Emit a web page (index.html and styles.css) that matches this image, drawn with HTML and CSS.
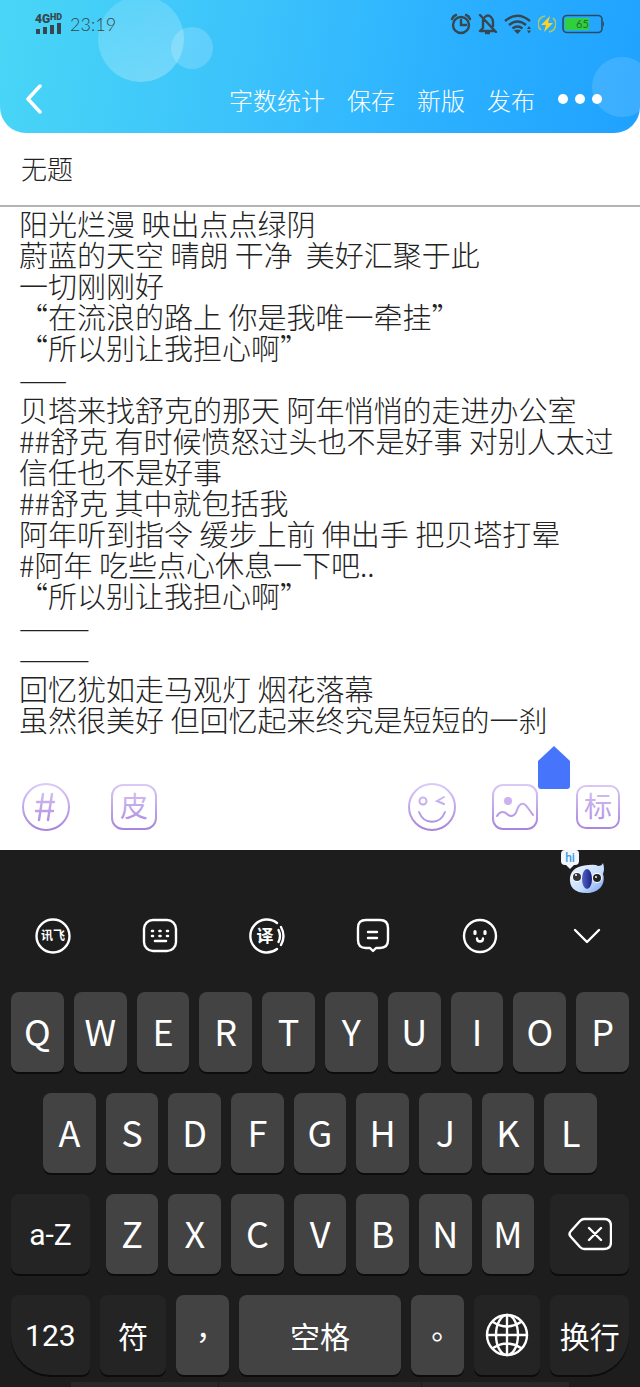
FILE: index.html
```html
<!DOCTYPE html>
<html lang="zh-CN">
<head>
    <meta charset="UTF-8">
    <meta name="viewport" content="width=device-width, initial-scale=1.0">
    <title>无题</title>
    <link rel="stylesheet" href="styles.css">
</head>
<body>
    <header class="header">
        <span class="bubble bubble-big"></span>
        <span class="bubble bubble-small"></span>
        <span class="bubble bubble-right"></span>
        <div class="status">
            <svg class="signal" width="28" height="24" viewBox="0 0 28 24">
                <text x="0" y="11" font-size="12">4G</text>
                <text x="15" y="8" font-size="9">HD</text>
                <path d="M1 17h4v5H1zM8 15h4v7H8zM15 13h4v9h-4zM22 11h4v11h-4z"/>
            </svg>
            <span class="time">23:19</span>
            <div class="status-icons">
                <svg width="22" height="22" viewBox="0 0 22 22" fill="none" stroke="#37474f" stroke-width="2.4">
                    <circle cx="11" cy="12" r="8"/>
                    <path d="M11 7v5h5M2 6q1-3 4-4M20 6q-1-3-4-4" stroke-linecap="round"/>
                </svg>
                <svg width="20" height="22" viewBox="0 0 20 22" fill="none" stroke="#37474f" stroke-width="2.4">
                    <path d="M5 7v8l-3 3h14M7 4q3-3 6 0 2 2 2 5v4M2 2l16 17" stroke-linecap="round" stroke-linejoin="round"/>
                    <path d="M7 20h5"/>
                </svg>
                <svg width="28" height="22" viewBox="0 0 28 22" fill="none" stroke="#37474f" stroke-width="2.4">
                    <path d="M1 8q12.500-10.500 25 0M5 12q8.500-7 17 0M8.500 15.500q5-4 10 0"/>
                    <path d="M10 17.500q3.500-2 7 0L13.500 21z" fill="#37474f" stroke="none"/>
                    <path d="M23 16l2-3 2 3zM23 17.500l2 3 2-3z" fill="#37474f" stroke="none"/>
                </svg>
                <svg width="18" height="20" viewBox="0 0 18 20">
                    <path d="M7 2A8 8 0 0 0 3 16M11 18A8 8 0 0 0 15 4" fill="none" stroke="#b5c95a" stroke-width="1.600"/>
                    <path d="M12 2L3 11h5l-2 7 9-9h-5z" fill="#ffd21f"/>
                </svg>
                <svg class="battery" width="43" height="20" viewBox="0 0 43 20">
                    <rect x="1" y="1.500" width="39" height="17" rx="4" fill="none" stroke="#2d4a63" stroke-width="1.600"/>
                    <path d="M41 7q2 3 0 6z" fill="#2d4a63"/>
                    <rect x="3" y="4" width="24" height="12" rx="2" fill="#2ed13c"/>
                    <text x="14" y="14" font-size="11">65</text>
                </svg>
            </div>
        </div>
        <nav class="nav">
            <button class="back" aria-label="返回">
                <svg width="18" height="30" viewBox="0 0 18 30" fill="none" stroke="#fff" stroke-width="3.500" stroke-linecap="round" stroke-linejoin="round"><path d="M15 2L3 15l12 13"/></svg>
            </button>
            <button>字数统计</button>
            <button>保存</button>
            <button>新版</button>
            <button>发布</button>
            <button class="more" aria-label="更多">
                <svg width="46" height="12" viewBox="0 0 46 12" fill="#fff"><circle cx="6" cy="6" r="5"/><circle cx="23" cy="6" r="5"/><circle cx="40" cy="6" r="5"/></svg>
            </button>
        </nav>
    </header>

    <main class="editor">
        <input class="title" type="text" value="无题" aria-label="标题">
        <textarea class="content" rows="17" aria-label="正文" spellcheck="false">阳光烂漫 映出点点绿阴
蔚蓝的天空 晴朗 干净  美好汇聚于此
一切刚刚好
“在流浪的路上 你是我唯一牵挂”
“所以别让我担心啊”
——
贝塔来找舒克的那天 阿年悄悄的走进办公室
##舒克 有时候愤怒过头也不是好事 对别人太过信任也不是好事
##舒克 其中就包括我
阿年听到指令 缓步上前 伸出手 把贝塔打晕
#阿年 吃些点心休息一下吧..
“所以别让我担心啊”
———
———
回忆犹如走马观灯 烟花落幕
虽然很美好 但回忆起来终究是短短的一刹</textarea>
        <svg class="handle" width="32" height="43" viewBox="0 0 32 43"><path d="M16 0l16 15v25q0 3-3 3H3q-3 0-3-3V15z" fill="#4674fb"/></svg>
        <div class="tools">
            <div class="tools-left">
                <button aria-label="话题">
                    <svg width="48" height="48" viewBox="0 0 48 48" fill="none" stroke="url(#violet)" stroke-width="2">
                        <defs>
                            <linearGradient id="violet" gradientUnits="userSpaceOnUse" x1="0" y1="0" x2="0" y2="48">
                                <stop offset="0" stop-color="#dccbf8"/>
                                <stop offset="1" stop-color="#a683dc"/>
                            </linearGradient>
                        </defs>
                        <circle cx="24" cy="24" r="23"/>
                        <path d="M21 11l-4 26M30 11l-4 26M15 19h17M14 28h17" stroke-width="2.400" stroke-linecap="round"/>
                    </svg>
                </button>
                <button aria-label="皮肤">
                    <svg width="48" height="48" viewBox="0 0 48 48" fill="none" stroke="url(#violet)" stroke-width="2">
                        <rect x="2" y="2" width="44" height="44" rx="11"/>
                        <text class="tool-text" x="24" y="34">皮</text>
                    </svg>
                </button>
            </div>
            <div class="tools-right">
                <button aria-label="表情">
                    <svg width="48" height="48" viewBox="0 0 48 48" fill="none" stroke="url(#violet)" stroke-width="2" stroke-linecap="round">
                        <circle cx="24" cy="24" r="23"/>
                        <circle cx="15" cy="18" r="3.500"/>
                        <path d="M36 14l-7 4 7 3M11 29c5 13 21 13 26 0"/>
                    </svg>
                </button>
                <button aria-label="图片">
                    <svg width="48" height="48" viewBox="0 0 48 48" fill="none" stroke="url(#violet)" stroke-width="2" stroke-linecap="round">
                        <rect x="2" y="2" width="44" height="44" rx="10"/>
                        <circle cx="17" cy="18" r="4" fill="#ccb2f2" stroke="none"/>
                        <path d="M6 33c3-5 7-5 10-2s8 3 10-4c3-8 7-8 11-2l5 7"/>
                    </svg>
                </button>
                <button aria-label="标签">
                    <svg width="48" height="48" viewBox="0 0 48 48" fill="none" stroke="url(#violet)" stroke-width="2">
                        <rect x="3" y="3" width="42" height="42" rx="9"/>
                        <text class="tool-text" x="24" y="34">标</text>
                    </svg>
                </button>
            </div>
        </div>
    </main>

    <section class="keyboard">
        <div class="mascot">
            <svg width="46" height="44" viewBox="0 0 46 44">
                <defs>
                    <linearGradient id="face" x1="0" y1="0" x2="1" y2="1">
                        <stop offset="0" stop-color="#f4f8ff"/>
                        <stop offset=".6" stop-color="#c4dcff"/>
                        <stop offset="1" stop-color="#6f9bf0"/>
                    </linearGradient>
                    <linearGradient id="nose" x1="0" x2="1">
                        <stop offset="0" stop-color="#5363c8"/>
                        <stop offset="1" stop-color="#18207d"/>
                    </linearGradient>
                </defs>
                <path d="M28 15q8-1 10 1 4 0 5-3 2 6 0 11c3 9-3 19-16 19S9 37 10 27q2-11 18-12z" fill="url(#face)"/>
                <circle cx="17" cy="27" r="5" fill="#fff"/><circle cx="17" cy="27" r="4" fill="#333"/><circle cx="16" cy="25" r="1" fill="#fff"/>
                <circle cx="37" cy="28" r="5" fill="#fff"/><circle cx="37" cy="28" r="4" fill="#222"/><circle cx="36" cy="27" r="1" fill="#fff"/>
                <ellipse cx="27" cy="29" rx="5" ry="10" fill="url(#nose)"/>
                <path d="M5 0h11q3 0 3 4v7q0 4-4 4h-1l-4 4-4-4H5q-4 0-4-4V4q0-4 4-4z" fill="#f3f7fc"/>
                <text class="hi" x="10" y="12">hi</text>
            </svg>
        </div>
        <div class="kb-tools">
            <button aria-label="讯飞">
                <svg width="36" height="36" viewBox="0 0 36 36">
                    <circle cx="18" cy="18" r="16.500"/>
                    <text x="18" y="22" font-size="12">讯飞</text>
                </svg>
            </button>
            <button aria-label="键盘">
                <svg width="36" height="36" viewBox="0 0 36 36">
                    <rect x="2" y="2" width="32" height="31" rx="9"/>
                    <path d="M10 13h1M17.500 13h1M25 13h1M10 18h1M17.500 18h1M25 18h1M13 23h11" stroke-width="2.600"/>
                </svg>
            </button>
            <button aria-label="翻译">
                <svg width="36" height="36" viewBox="0 0 36 36">
                    <path d="M28 5A16.500 16.500 0 1 0 28 31M29.500 12q3 6 0 12M32 9q5 9 0 18"/>
                    <text x="16" y="24" font-size="17">译</text>
                </svg>
            </button>
            <button aria-label="短语">
                <svg width="36" height="36" viewBox="0 0 36 36">
                    <path d="M11 2h14q8 0 8 8v12q0 8-8 8h-4l-3 3-3-3h-4q-8 0-8-8V10q0-8 8-8zM13 14h9M13 20h9"/>
                </svg>
            </button>
            <button aria-label="表情">
                <svg width="36" height="36" viewBox="0 0 36 36">
                    <circle cx="18" cy="18" r="16"/>
                    <path d="M13 13.500v2M23 13.500v2" stroke-width="3.200"/>
                    <path d="M15 20.500q0 3 3 3t3-3"/>
                </svg>
            </button>
            <button aria-label="收起">
                <svg width="36" height="36" viewBox="0 0 36 36"><path d="M6 12l12 12 12-12"/></svg>
            </button>
        </div>
        <div class="keys">
            <div class="row row-top">
                <button class="key">Q</button>
                <button class="key">W</button>
                <button class="key">E</button>
                <button class="key">R</button>
                <button class="key">T</button>
                <button class="key">Y</button>
                <button class="key">U</button>
                <button class="key">I</button>
                <button class="key">O</button>
                <button class="key">P</button>
            </div>
            <div class="row row-middle">
                <button class="key">A</button>
                <button class="key">S</button>
                <button class="key">D</button>
                <button class="key">F</button>
                <button class="key">G</button>
                <button class="key">H</button>
                <button class="key">J</button>
                <button class="key">K</button>
                <button class="key">L</button>
            </div>
            <div class="row row-bottom">
                <button class="key dark">a-Z</button>
                <div class="row row-letters">
                    <button class="key">Z</button>
                    <button class="key">X</button>
                    <button class="key">C</button>
                    <button class="key">V</button>
                    <button class="key">B</button>
                    <button class="key">N</button>
                    <button class="key">M</button>
                </div>
                <button class="key dark" aria-label="删除">
                    <svg width="44" height="34" viewBox="0 0 44 34"><path d="M16 2h20q7 0 7 7v16q0 7-7 7H16q-2 0-4-2L3 20q-3-3 0-6l9-10q2-2 4-2zM21 11l12 12M33 11L21 23"/></svg>
                </button>
            </div>
            <div class="row row-space">
                <button class="key dark corner-left">123</button>
                <button class="key dark">符</button>
                <button class="key mark" lang="zh-TW">，</button>
                <button class="key word">空格</button>
                <button class="key mark" lang="zh-TW">。</button>
                <button class="key dark" aria-label="切换语言">
                    <svg width="44" height="44" viewBox="0 0 44 44"><circle cx="22" cy="22" r="20"/><ellipse cx="22" cy="22" rx="11" ry="20"/><path d="M22 2v40M2 22h40M8 9q14 9 28 0M8 35q14-9 28 0"/></svg>
                </button>
                <button class="key dark corner-right">换行</button>
            </div>
        </div>
        <div class="dock"><span></span><span></span><span></span></div>
    </section>
</body>
</html>
```

FILE: styles.css
```css
* {
    box-sizing: border-box;
}
body {
    margin: 0;
    background-color: #fff;
    font-family: "Noto Sans CJK SC", sans-serif;
}
button {
    padding: 0;
    border: none;
    background: none;
    color: inherit;
    font-family: inherit;
    cursor: pointer;
}
svg {
    display: block;
}

/* header */
.header {
    position: relative;
    overflow: hidden;
    background: linear-gradient(100deg, #49d6f6 0%, #3bc2fb 40%, #2bb0ff 70%, #1fa2ff 100%);
    border-radius: 0 0 26px 26px;
    color: #fff;
}
.bubble {
    position: absolute;
    border-radius: 50%;
    background: linear-gradient(150deg, rgba(255, 255, 255, 0.12), rgba(255, 255, 255, 0.28));
}
.bubble-big {
    left: 98px;
    top: -4px;
    width: 86px;
    height: 86px;
}
.bubble-small {
    left: 171px;
    top: 27px;
    width: 42px;
    height: 42px;
    background: rgba(255, 255, 255, 0.18);
}
.bubble-right {
    right: -12px;
    top: 57px;
    width: 60px;
    height: 60px;
    background: rgba(255, 255, 255, 0.13);
}
.status {
    position: relative;
    display: flex;
    align-items: center;
    gap: 7px;
    height: 48px;
    padding: 0 35px;
    color: #37474f;
}
.signal {
    fill: #37474f;
    font-family: Roboto, sans-serif;
    font-weight: 900;
}
.time {
    font-family: Lato, sans-serif;
    font-size: 18px;
    font-weight: 300;
}
.status-icons {
    display: flex;
    align-items: center;
    gap: 6px;
    margin-left: auto;
}
.battery {
    font-family: Lato, sans-serif;
    fill: #2c6b35;
}
.nav {
    position: relative;
    display: flex;
    align-items: center;
    gap: 22px;
    height: 68px;
    margin-top: 17px;
    padding: 0 37px 0 25px;
}
.nav button {
    font-size: 24px;
    font-weight: 300;
}
.nav .back {
    margin-right: auto;
}

/* editor */
.editor {
    position: relative;
}
.title,
.content {
    display: block;
    width: 100%;
    margin: 0;
    border: none;
    outline: none;
    background: none;
    color: #222;
    font-family: inherit;
    font-weight: 300;
}
.title {
    height: 74px;
    padding: 0 21px 4px;
    border-bottom: 2px solid #b4b4b4;
    font-size: 26px;
}
.content {
    padding: 1px 19px 0;
    overflow: hidden;
    resize: none;
    font-size: 29px;
    line-height: 31px;
}
.handle {
    position: absolute;
    right: 70px;
    bottom: 61px;
}
.tools {
    display: flex;
    justify-content: space-between;
    padding: 48px 18px 19px 22px;
}
.tools-left,
.tools-right {
    display: flex;
    gap: 40px;
}
.tools-right {
    gap: 35px;
}
.tool-text {
    fill: url(#violet);
    stroke: none;
    font-size: 28px;
    text-anchor: middle;
}

/* keyboard */
.keyboard {
    background-color: #1d1d1d;
    color: #fff;
}
.mascot {
    display: flex;
    justify-content: flex-end;
    height: 68px;
    padding-right: 34px;
}
.hi {
    fill: #3a9be8;
    font-family: Roboto, sans-serif;
    font-size: 12px;
    font-weight: 500;
    text-anchor: middle;
}
.kb-tools {
    display: flex;
    justify-content: space-between;
    padding: 0 35px;
}
.kb-tools svg,
.key svg {
    fill: none;
    stroke: #fff;
    stroke-width: 2.4;
    stroke-linecap: round;
    stroke-linejoin: round;
}
.kb-tools text {
    fill: #fff;
    stroke: none;
    font-weight: 700;
    text-anchor: middle;
}
.keys {
    display: grid;
    gap: 21px;
    padding: 38px 11px 7px;
}
.row {
    display: grid;
    gap: 10px;
}
.row-top {
    grid-template-columns: repeat(10, 1fr);
}
.row-middle {
    grid-template-columns: repeat(9, 1fr);
    padding: 0 32px;
}
.row-bottom {
    grid-template-columns: 79fr 429fr 79fr;
    gap: 16px;
}
.row-letters {
    grid-template-columns: repeat(7, 1fr);
}
.row-space {
    grid-template-columns: 79fr 67fr 53fr 162fr 53fr 67fr 79fr;
}
.key {
    display: flex;
    justify-content: center;
    align-items: center;
    min-width: 0;
    height: 80px;
    padding-bottom: 5px;
    border-radius: 8px;
    background-color: #434343;
    box-shadow: 0 2px 0 #0c0c0c;
    font-family: "Noto Sans CJK SC", sans-serif;
    font-size: 36px;
    font-weight: 400;
}
.key.dark {
    padding-bottom: 0;
    background-color: #242424;
    font-family: Roboto, "Noto Sans CJK SC", sans-serif;
    font-size: 30px;
}
.key.word,
.key.mark {
    padding-bottom: 0;
    font-size: 30px;
}
.key.mark {
    font-family: "Noto Sans CJK TC", sans-serif;
}
.key.corner-left {
    border-bottom-left-radius: 40px;
}
.key.corner-right {
    border-bottom-right-radius: 40px;
}
.dock {
    display: grid;
    grid-template-columns: 147fr 203fr 147fr;
    gap: 1px;
    padding: 0 71px;
}
.dock span {
    height: 5px;
    background-color: #282828;
}
```
